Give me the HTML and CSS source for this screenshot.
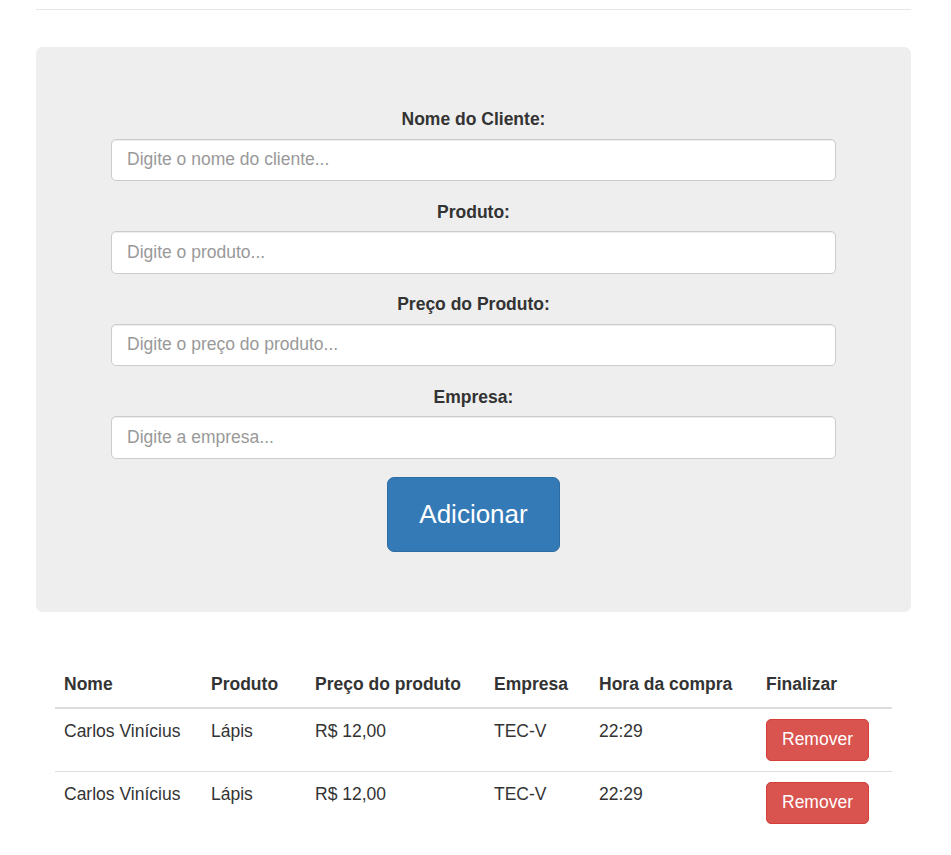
FILE: index.html
```html
<!DOCTYPE html>
<html lang="pt-BR">
<head>
<meta charset="utf-8">
<title>Cadastro de Compras</title>
<link rel="stylesheet" href="styles.css">
</head>
<body>
<div class="container">
  <hr class="divider">
  <div class="jumbotron">
    <form class="form">
      <div class="form-group">
        <label for="cliente">Nome do Cliente:</label>
        <input id="cliente" class="form-control" type="text" placeholder="Digite o nome do cliente...">
      </div>
      <div class="form-group">
        <label for="produto">Produto:</label>
        <input id="produto" class="form-control" type="text" placeholder="Digite o produto...">
      </div>
      <div class="form-group">
        <label for="preco">Preço do Produto:</label>
        <input id="preco" class="form-control" type="text" placeholder="Digite o preço do produto...">
      </div>
      <div class="form-group last">
        <label for="empresa">Empresa:</label>
        <input id="empresa" class="form-control" type="text" placeholder="Digite a empresa...">
      </div>
      <button type="button" class="btn btn-primary btn-add">Adicionar</button>
    </form>
  </div>
  <div class="table-wrap">
    <table class="table">
      <colgroup>
        <col class="c1"><col class="c2"><col class="c3"><col class="c4"><col class="c5"><col class="c6">
      </colgroup>
      <thead>
        <tr>
          <th>Nome</th>
          <th>Produto</th>
          <th>Preço do produto</th>
          <th>Empresa</th>
          <th>Hora da compra</th>
          <th>Finalizar</th>
        </tr>
      </thead>
      <tbody>
        <tr>
          <td>Carlos Vinícius</td>
          <td>Lápis</td>
          <td>R$ 12,00</td>
          <td>TEC-V</td>
          <td>22:29</td>
          <td><button type="button" class="btn btn-danger">Remover</button></td>
        </tr>
        <tr>
          <td>Carlos Vinícius</td>
          <td>Lápis</td>
          <td>R$ 12,00</td>
          <td>TEC-V</td>
          <td>22:29</td>
          <td><button type="button" class="btn btn-danger">Remover</button></td>
        </tr>
      </tbody>
    </table>
  </div>
</div>
</body>
</html>
```

FILE: styles.css
```css
* { box-sizing: border-box; }

html, body {
  margin: 0;
  padding: 0;
  background: #fff;
}

body {
  font-family: "Liberation Sans", Arial, Helvetica, sans-serif;
  font-size: 17.5px;
  line-height: 25px;
  color: #333;
}

.container {
  width: 875px;
  margin-left: 36px;
}

.divider {
  margin: 9px 0 37px 0;
  border: 0;
  border-top: 1px solid #e6e6e6;
  height: 0;
}

.jumbotron {
  background: #eee;
  border-radius: 7px;
  padding: 60px 0 60px 0;
  margin-bottom: 50px;
}

.form {
  display: flex;
  flex-direction: column;
  align-items: center;
}

.form-group {
  width: 725px;
  display: flex;
  flex-direction: column;
  align-items: center;
  margin-bottom: 18.5px;
}

.form-group.last {
  margin-bottom: 18px;
}

.form-group label {
  font-weight: bold;
  margin-bottom: 6.5px;
  line-height: 25px;
}

.form-control {
  display: block;
  width: 100%;
  height: 42.5px;
  padding: 7.5px 15px;
  font-family: inherit;
  font-size: 17.5px;
  line-height: 25px;
  color: #555;
  background: #fff;
  border: 1px solid #ccc;
  border-radius: 5px;
  box-shadow: inset 0 1px 1px rgba(0,0,0,.075);
}

.form-control::placeholder {
  color: #999;
  opacity: 1;
}

.btn {
  display: inline-block;
  font-family: inherit;
  font-size: 17.5px;
  line-height: 25px;
  padding: 7.5px 15px;
  border: 1px solid transparent;
  border-radius: 5px;
  color: #fff;
  cursor: pointer;
  white-space: nowrap;
}

.btn-primary {
  background: #337ab7;
  border-color: #2e6da4;
}

.btn-add {
  font-size: 26px;
  line-height: 37px;
  padding: 18px 31px;
  border-radius: 7px;
}

.btn-danger {
  background: #d9534f;
  border-color: #d43f3a;
}

.table-wrap {
  padding: 0 19px;
}

.table {
  width: 100%;
  border-collapse: collapse;
  border-spacing: 0;
  table-layout: fixed;
}

.c1 { width: 147px; }
.c2 { width: 104px; }
.c3 { width: 179px; }
.c4 { width: 105px; }
.c5 { width: 167px; }
.c6 { width: 135px; }

.table th,
.table td {
  padding: 10px 9px;
  text-align: left;
  vertical-align: top;
  line-height: 25px;
}

.table th {
  font-weight: bold;
  vertical-align: bottom;
  border-bottom: 2px solid #ddd;
}

.table tbody td {
  border-top: 1px solid #ddd;
}

.table tbody tr:first-child td {
  border-top: 0;
}
```
